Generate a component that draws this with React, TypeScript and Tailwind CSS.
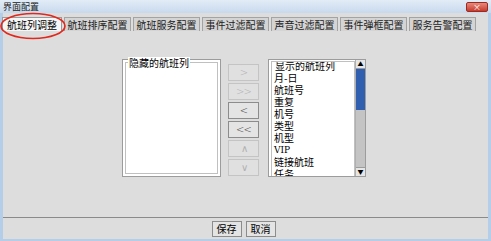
import React from "react"

const font = { fontFamily: '"Noto Sans CJK SC", "Liberation Sans", sans-serif' }

const tabs = ["航班列调整", "航班排序配置", "航班服务配置", "事件过滤配置", "声音过滤配置", "事件弹框配置", "服务告警配置"]

const shown = ["月-日", "航班号", "重复", "机号", "类型", "机型", "VIP", "链接航班", "任务"]

const moves = [
  { label: ">", on: false },
  { label: ">>", on: false },
  { label: "<", on: true },
  { label: "<<", on: true },
  { label: "∧", on: false },
  { label: "∨", on: false },
]

const MoveButton = ({ label, on }: { label: string; on: boolean }) => (
  <button
    style={{ fontFamily: '"DejaVu Sans", sans-serif' }}
    className={`h-[17px] w-[31px] flex items-center justify-center border text-[10px] font-light leading-none tracking-[-1px] ${
      on ? "border-[#8c8c8c] text-[#444] bg-[#e4e4e4]" : "border-[#c4c4c4] text-[#b0b0b0] bg-[#e0e0e0]"
    }`}
  >
    {label}
  </button>
)

export default function App() {
  return (
    <div style={font} className="relative w-[491px] h-[241px] bg-[#b4cde9] flex flex-col overflow-hidden text-black">
      {/* title bar */}
      <div className="h-[13px] flex items-center justify-between bg-gradient-to-b from-[#e3ecf7] to-[#c8d9ed]">
        <span className="pl-[3px] text-[9px] leading-none text-[#222]">界面配置</span>
        <div className="mr-[3px] h-[10px] w-[22px] rounded-[2px] bg-gradient-to-b from-[#e48a7e] to-[#c7392b] border border-[#9c2a20] flex items-center justify-center text-white text-[8px] leading-none">
          ×
        </div>
      </div>

      {/* body */}
      <div className="flex-1 mx-[3px] bg-[#dddddd] flex flex-col">
        <div className="flex gap-[2px] mt-[4px] h-[14px] items-end">
          {tabs.map((t, i) => (
            <div
              key={t}
              className={`h-[14px] flex items-center justify-center whitespace-nowrap border border-b-0 text-[10px] leading-none ${
                i === 0 ? "w-[60px] -ml-[1px] bg-[#f6f6f6] border-[#9a9a9a]" : "w-[67px] bg-[#d4d4d4] border-[#a3a3a3] text-[#222]"
              }`}
            >
              {t}
            </div>
          ))}
        </div>

        <div className="flex mt-[28px] pl-[119px] h-[118px]">
          {/* hidden list */}
          <div className="w-[99px] h-full border border-[#9c9c9c] bg-white p-[2px]">
            <div className="relative h-full border border-[#c0c0c0]">
              <span className="absolute -top-[6px] left-[2px] bg-white px-[1px] text-[10px] leading-[12px] whitespace-nowrap">隐藏的航班列</span>
            </div>
          </div>

          <div className="ml-[7px] mt-[5px] flex flex-col gap-[2px]">
            {moves.map((m) => (
              <MoveButton key={m.label} label={m.label} on={m.on} />
            ))}
          </div>

          {/* shown list */}
          <div className="ml-[9px] w-[98px] h-full border border-[#9c9c9c] bg-white flex">
            <div className="flex-1 pl-[2px] pt-[1px] overflow-hidden">
              <div className="h-full border border-[#c0c0c0] border-b-0 relative overflow-hidden">
                <span className="absolute -top-[2px] left-[2px] bg-white px-[1px] text-[10px] leading-[12px] whitespace-nowrap">显示的航班列</span>
                <div className="pt-[10px] pl-[2px] flex flex-col text-[10px] leading-[12px]">
                  {shown.map((s) => (
                    <span
                      key={s}
                      className="h-[12px] whitespace-nowrap"
                      style={s === "VIP" ? { fontFamily: '"DejaVu Serif", serif', fontSize: "9px" } : undefined}
                    >
                      {s}
                    </span>
                  ))}
                </div>
              </div>
            </div>
            <div className="w-[10px] h-full flex flex-col bg-[#c4c4c4] border-l border-[#b0b0b0]">
              <div className="h-[9px] bg-[#e6e6e6] border-b border-[#9c9c9c] flex items-center justify-center text-[6px] leading-none">▲</div>
              <div className="h-[41px] bg-[#2f5fae]" />
              <div className="flex-1" />
              <div className="h-[9px] bg-[#e6e6e6] border-t border-[#9c9c9c] flex items-center justify-center text-[6px] leading-none">▼</div>
            </div>
          </div>
        </div>

        <div className="flex-1" />
        <div className="h-[1px] bg-[#8a8a8a]" />
        <div className="h-[21px] flex items-center justify-center gap-[4px] pr-[4px]">
          <button className="h-[16px] w-[30px] border border-[#8c8c8c] bg-[#e4e4e4] text-[10px] leading-none">保存</button>
          <button className="h-[16px] w-[30px] border border-[#8c8c8c] bg-[#e4e4e4] text-[10px] leading-none">取消</button>
        </div>
      </div>
      <div className="h-[2px]" />

      {/* red annotation circle */}
      <svg className="absolute left-0 top-[12px]" width="68" height="30" viewBox="0 0 68 30">
        <ellipse cx="33" cy="14" rx="32" ry="12.5" fill="none" stroke="#e0281c" strokeWidth="1.6" />
      </svg>
    </div>
  )
}
